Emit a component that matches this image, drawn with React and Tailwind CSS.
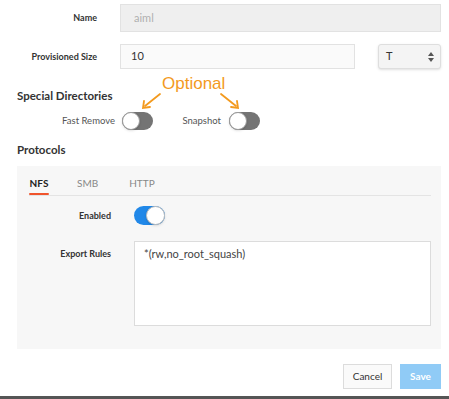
import React from "react";

const font = { fontFamily: "Lato, 'Liberation Sans', sans-serif" };

const Toggle = ({ on, className = "" }) => (
    <div
        className={`relative rounded-full ${on ? "bg-[#2188e8]" : "bg-[#747474]"} ${className}`}
    >
        <div
            className={`absolute top-0 bottom-0 aspect-square rounded-full bg-white border ${
                on ? "right-0 border-[#bdbdbd]" : "left-0 border-[#9a9a9a]"
            } shadow-sm`}
        />
    </div>
);

const App = () => {
    return (
        <div
            className="relative w-[449px] h-[399px] bg-white overflow-hidden pt-[4px] pr-[8px] text-[#333]"
            style={font}
        >
            {/* annotation */}
            <div
                className="absolute left-[162px] top-[74px] text-[17px] leading-[20px] text-[#f39a1e]"
                style={{ fontFamily: "'Liberation Sans', Arial, sans-serif" }}
            >
                Optional
            </div>
            <svg className="absolute left-[138px] top-[92px]" width="110" height="22" viewBox="0 0 110 22">
                <g stroke="#f39a1e" strokeWidth="1.8" fill="none" strokeLinecap="round">
                    <line x1="22" y1="2" x2="7" y2="14" />
                    <polyline points="6,9 5,16 12,15" />
                    <line x1="83" y1="2" x2="98" y2="14" />
                    <polyline points="99,9 100,16 93,15" />
                </g>
            </svg>

            <div className="flex items-center h-[28px]">
                <p className="w-[97px] text-right text-[9px] font-bold">Name</p>
                <div className="ml-[23px] flex-1 h-full flex items-center bg-[#efefef] border border-[#e2e2e2] pl-[13px] text-[11px] text-[#b0b0b0]">
                    aiml
                </div>
            </div>

            <div className="flex items-center h-[25px] mt-[12px]">
                <p className="w-[97px] text-right text-[9px] font-bold">Provisioned Size</p>
                <div className="ml-[23px] w-[235px] h-full flex items-center bg-[#fafafa] border border-[#e2e2e2] pl-[10px] text-[11px]">
                    10
                </div>
                <div className="ml-auto w-[63px] h-full flex items-center justify-between bg-[#f4f4f4] border border-[#dedede] rounded-[3px] shadow-sm pl-[7px] pr-[6px] text-[11px]">
                    <span>T</span>
                    <svg width="6" height="10" viewBox="0 0 6 10">
                        <path d="M3 0 L6 4 H0 Z M3 10 L6 6 H0 Z" fill="#555" />
                    </svg>
                </div>
            </div>

            <h2 className="mt-[19px] ml-[17px] text-[11.5px] leading-[16px] font-bold">Special Directories</h2>

            <div className="flex items-center mt-[8px] h-[18px] text-[9.5px] text-[#555]">
                <span className="w-[115px] text-right">Fast Remove</span>
                <Toggle className="ml-[7px] w-[31px] h-[18px]" />
                <span className="w-[68px] text-right">Snapshot</span>
                <Toggle className="ml-[8px] w-[31px] h-[18px]" />
            </div>

            <h2 className="mt-[12px] ml-[17px] text-[11.5px] leading-[16px] font-bold">Protocols</h2>

            <div className="mt-[8px] ml-[17px] h-[183px] bg-[#f7f7f7] pl-[12px] pr-[10px] pt-[10px]">
                <div className="flex items-end h-[20px] border-b border-[#e4e4e4] text-[10px]">
                    <div className="w-[20px] h-full flex flex-col items-center justify-between">
                        <span className="font-bold text-[#222] leading-[14px]">NFS</span>
                        <div className="w-full h-[2px] bg-[#f0542c] rounded-full" />
                    </div>
                    <span className="ml-[28px] h-full leading-[14px] text-[#888]">SMB</span>
                    <span className="ml-[31px] h-full leading-[14px] text-[#888]">HTTP</span>
                </div>

                <div className="flex items-center mt-[10px] h-[19px]">
                    <p className="w-[82px] text-right text-[9px] font-bold">Enabled</p>
                    <Toggle on className="ml-[23px] w-[31px] h-[19px]" />
                </div>

                <div className="flex items-start mt-[16px]">
                    <p className="w-[82px] text-right text-[9px] font-bold mt-[6px]">Export Rules</p>
                    <div className="ml-[23px] flex-1 h-[85px] bg-white border border-[#dcdcdc] px-[9px] pt-[4px] text-[11px] text-[#444]">
                        *(rw,no_root_squash)
                    </div>
                </div>
            </div>

            <div className="flex justify-end gap-[8px] mt-[15px]">
                <button className="w-[49px] h-[25px] bg-[#fafafa] border border-[#dcdcdc] text-[10px] text-[#333]">
                    Cancel
                </button>
                <button className="w-[41px] h-[25px] bg-[#90cbf6] text-[10px] font-bold text-white">
                    Save
                </button>
            </div>

            <div className="absolute left-0 right-0 bottom-0 h-[3px] bg-[#555]" />
        </div>
    );
};

export default App;
